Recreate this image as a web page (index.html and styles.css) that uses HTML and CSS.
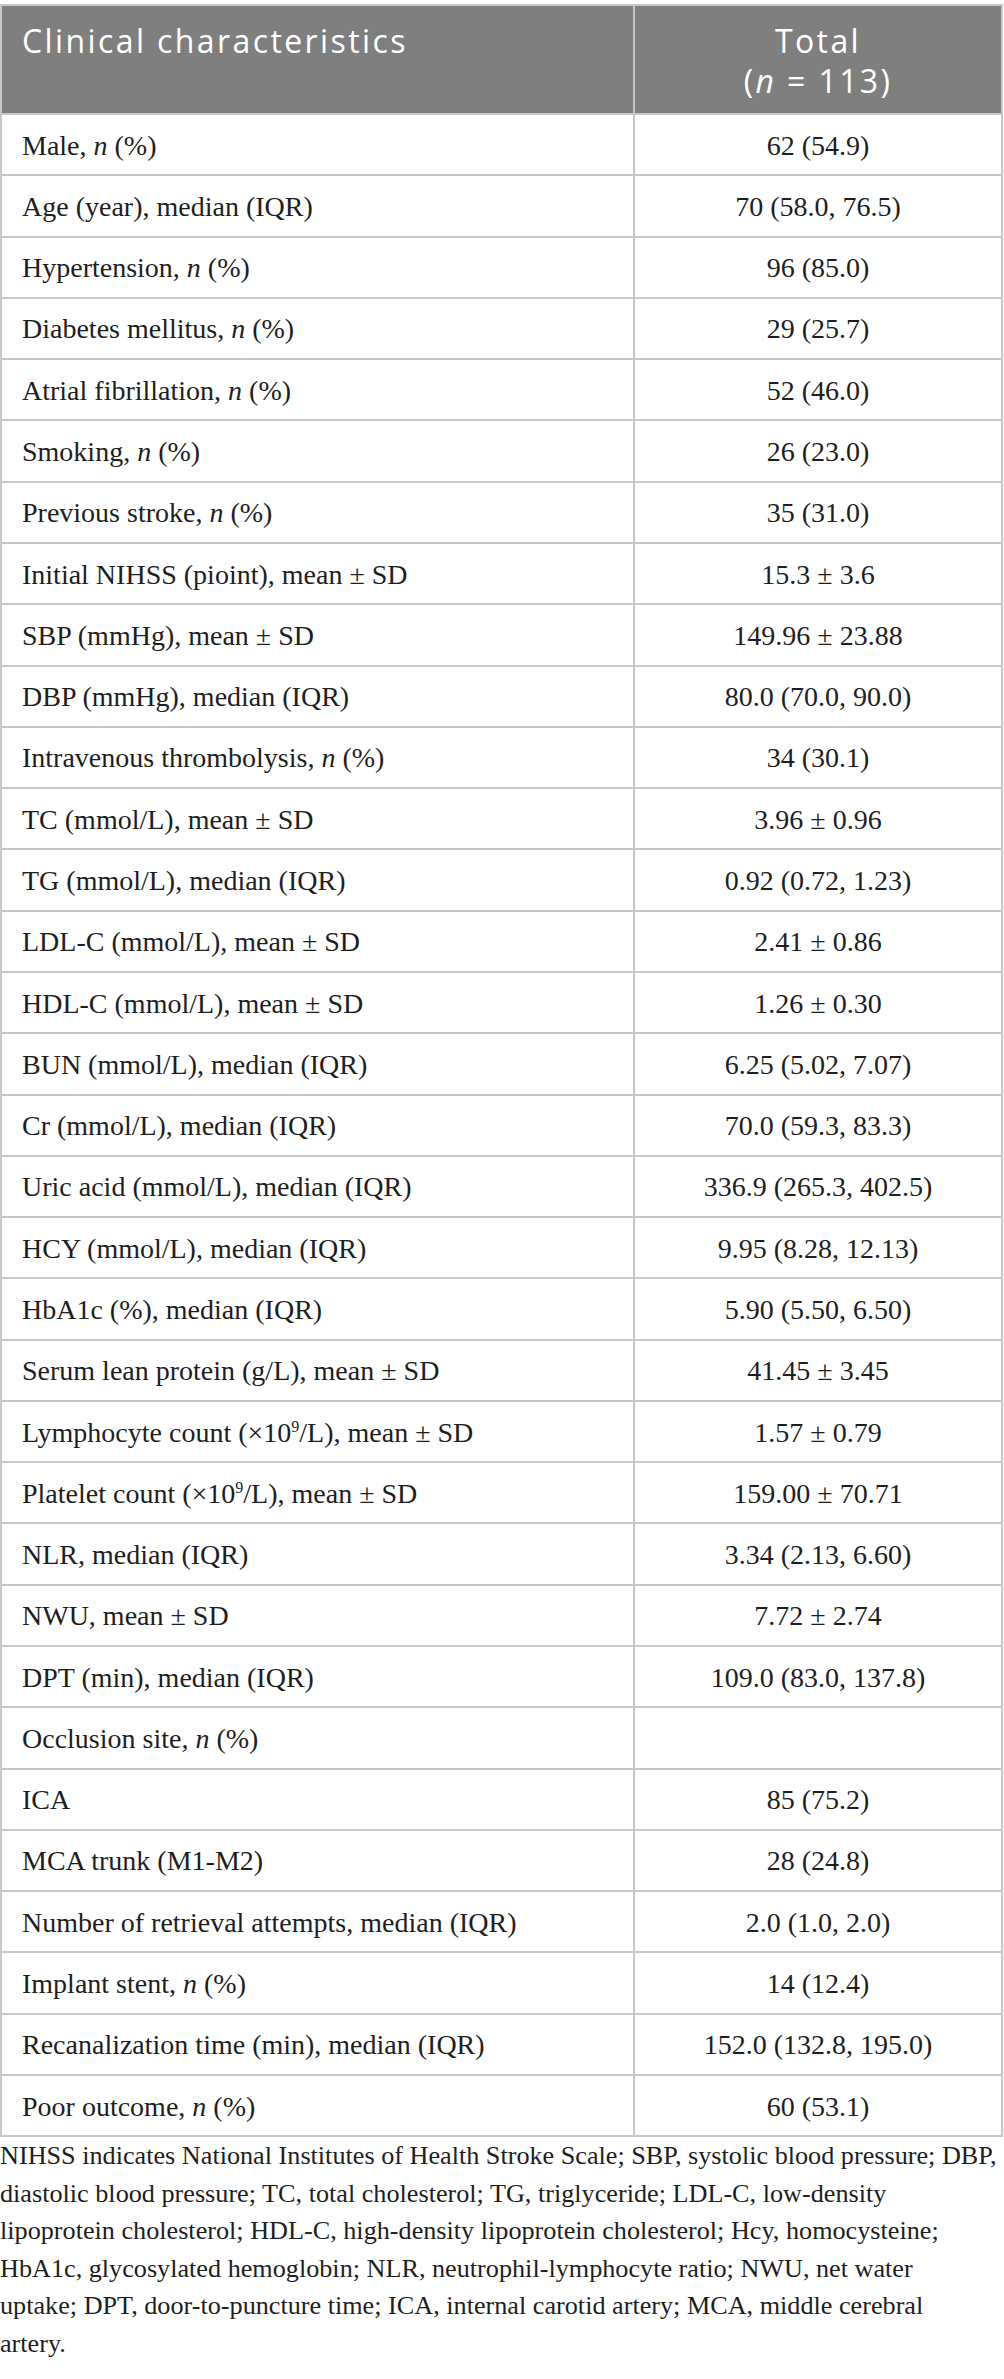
FILE: index.html
```html
<!DOCTYPE html>
<html lang="en">
<head>
<meta charset="utf-8">
<title>Clinical characteristics</title>
<link rel="stylesheet" href="styles.css">
</head>
<body>
<main class="page">
<table class="stats">
<colgroup><col class="c-label"><col class="c-total"></colgroup>
<thead>
<tr><th class="h-label">Clinical characteristics</th><th class="h-total">Total<br>(<i>n</i> = 113)</th></tr>
</thead>
<tbody>
<tr><td>Male, <i>n</i> (%)</td><td class="num">62 (54.9)</td></tr>
<tr><td>Age (year), median (IQR)</td><td class="num">70 (58.0, 76.5)</td></tr>
<tr><td>Hypertension, <i>n</i> (%)</td><td class="num">96 (85.0)</td></tr>
<tr><td>Diabetes mellitus, <i>n</i> (%)</td><td class="num">29 (25.7)</td></tr>
<tr><td>Atrial fibrillation, <i>n</i> (%)</td><td class="num">52 (46.0)</td></tr>
<tr><td>Smoking, <i>n</i> (%)</td><td class="num">26 (23.0)</td></tr>
<tr><td>Previous stroke, <i>n</i> (%)</td><td class="num">35 (31.0)</td></tr>
<tr><td>Initial NIHSS (pioint), mean ± SD</td><td class="num">15.3 ± 3.6</td></tr>
<tr><td>SBP (mmHg), mean ± SD</td><td class="num">149.96 ± 23.88</td></tr>
<tr><td>DBP (mmHg), median (IQR)</td><td class="num">80.0 (70.0, 90.0)</td></tr>
<tr><td>Intravenous thrombolysis, <i>n</i> (%)</td><td class="num">34 (30.1)</td></tr>
<tr><td>TC (mmol/L), mean ± SD</td><td class="num">3.96 ± 0.96</td></tr>
<tr><td>TG (mmol/L), median (IQR)</td><td class="num">0.92 (0.72, 1.23)</td></tr>
<tr><td>LDL-C (mmol/L), mean ± SD</td><td class="num">2.41 ± 0.86</td></tr>
<tr><td>HDL-C (mmol/L), mean ± SD</td><td class="num">1.26 ± 0.30</td></tr>
<tr><td>BUN (mmol/L), median (IQR)</td><td class="num">6.25 (5.02, 7.07)</td></tr>
<tr><td>Cr (mmol/L), median (IQR)</td><td class="num">70.0 (59.3, 83.3)</td></tr>
<tr><td>Uric acid (mmol/L), median (IQR)</td><td class="num">336.9 (265.3, 402.5)</td></tr>
<tr><td>HCY (mmol/L), median (IQR)</td><td class="num">9.95 (8.28, 12.13)</td></tr>
<tr><td>HbA1c (%), median (IQR)</td><td class="num">5.90 (5.50, 6.50)</td></tr>
<tr><td>Serum lean protein (g/L), mean ± SD</td><td class="num">41.45 ± 3.45</td></tr>
<tr><td>Lymphocyte count (×10<sup>9</sup>/L), mean ± SD</td><td class="num">1.57 ± 0.79</td></tr>
<tr><td>Platelet count (×10<sup>9</sup>/L), mean ± SD</td><td class="num">159.00 ± 70.71</td></tr>
<tr><td>NLR, median (IQR)</td><td class="num">3.34 (2.13, 6.60)</td></tr>
<tr><td>NWU, mean ± SD</td><td class="num">7.72 ± 2.74</td></tr>
<tr><td>DPT (min), median (IQR)</td><td class="num">109.0 (83.0, 137.8)</td></tr>
<tr><td>Occlusion site, <i>n</i> (%)</td><td class="num"></td></tr>
<tr><td>ICA</td><td class="num">85 (75.2)</td></tr>
<tr><td>MCA trunk (M1-M2)</td><td class="num">28 (24.8)</td></tr>
<tr><td>Number of retrieval attempts, median (IQR)</td><td class="num">2.0 (1.0, 2.0)</td></tr>
<tr><td>Implant stent, <i>n</i> (%)</td><td class="num">14 (12.4)</td></tr>
<tr><td>Recanalization time (min), median (IQR)</td><td class="num">152.0 (132.8, 195.0)</td></tr>
<tr><td>Poor outcome, <i>n</i> (%)</td><td class="num">60 (53.1)</td></tr>
</tbody>
</table>
<p class="note">NIHSS indicates National Institutes of Health Stroke Scale; SBP, systolic blood pressure; DBP,<br>diastolic blood pressure; TC, total cholesterol; TG, triglyceride; LDL-C, low-density<br>lipoprotein cholesterol; HDL-C, high-density lipoprotein cholesterol; Hcy, homocysteine;<br>HbA1c, glycosylated hemoglobin; NLR, neutrophil-lymphocyte ratio; NWU, net water<br>uptake; DPT, door-to-puncture time; ICA, internal carotid artery; MCA, middle cerebral<br>artery.</p>
</main>
</body>
</html>
```
FILE: styles.css
```css
html, body {
  margin: 0;
  padding: 0;
  background: #ffffff;
}

.page {
  padding-top: 4px;
  width: 1004px;
}

.stats {
  width: 1003px;
  border-collapse: collapse;
  table-layout: fixed;
}

.c-label {
  width: 633px;
}

.stats th,
.stats td {
  border: 2px solid #c8c8c8;
}

.stats th {
  background: #7f7f7f;
  color: #ffffff;
  font-family: "Open Sans", "Noto Sans", sans-serif;
  font-weight: 400;
  font-size: 32px;
  letter-spacing: 2.4px;
  line-height: 40px;
  padding: 15px 20px 12px;
  vertical-align: top;
  text-align: left;
}

.stats th.h-total {
  text-align: center;
}

.stats td {
  font-family: "Liberation Serif", "Times New Roman", serif;
  font-size: 28px;
  line-height: 32px;
  color: #1e1e1e;
  padding: 14.6px 20px 12.7px;
  vertical-align: middle;
  text-align: left;
}

.stats td.num {
  text-align: center;
}

.stats sup {
  font-size: 16px;
  line-height: 0;
  vertical-align: 10px;
}

.note {
  margin: 0;
  font-family: "Liberation Serif", "Times New Roman", serif;
  font-size: 26.2px;
  line-height: 37.5px;
  color: #1e1e1e;
  white-space: nowrap;
}
```
